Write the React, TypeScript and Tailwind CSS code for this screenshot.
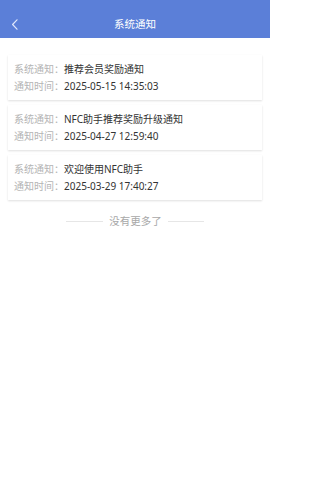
import React from "react";

const items = [
  { title: "推荐会员奖励通知", time: "2025-05-15 14:35:03" },
  { title: "NFC助手推荐奖励升级通知", time: "2025-04-27 12:59:40" },
  { title: "欢迎使用NFC助手", time: "2025-03-29 17:40:27" },
];

export default function App() {
  return (
    <div
      className="w-[270px] h-[480px] bg-white flex flex-col"
      style={{ fontFamily: '"Noto Sans", "Noto Sans CJK SC", sans-serif' }}
    >
      <div className="h-[38px] bg-[#5b7fd8] pt-[10px] shrink-0">
        <div className="relative h-[28px] flex items-center justify-center">
          <svg
            className="absolute left-[11px] top-[9px]"
            width="8"
            height="11"
            viewBox="0 0 8 11"
            fill="none"
          >
            <path d="M6 0.8 L1.6 5.5 L6 10.2" stroke="#dfe7fb" strokeWidth="1.2" strokeLinecap="round" strokeLinejoin="round" />
          </svg>
          <span className="text-[10.5px] text-white leading-none">系统通知</span>
        </div>
      </div>
      <div className="flex flex-col gap-[5px] px-[8px] pt-[17px]">
        {items.map((it, i) => (
          <div
            key={i}
            className="bg-white px-[6px] py-[5.5px] shadow-[0_1px_2px_rgba(0,0,0,0.13)] text-[10px] leading-[17px]"
          >
            <div className="flex">
              <span className="text-[#b4b4b4]">系统通知：</span>
              <span className="text-[#333333]">{it.title}</span>
            </div>
            <div className="flex">
              <span className="text-[#b4b4b4]">通知时间：</span>
              <span className="text-[#333333]">{it.time}</span>
            </div>
          </div>
        ))}
      </div>
      <div className="flex items-center justify-center gap-[6px] mt-[14px]">
        <div className="w-[37px] h-px bg-[#e6e6e6]" />
        <span className="text-[10.5px] leading-[14px] text-[#a8a8a8]">没有更多了</span>
        <div className="w-[36px] h-px bg-[#e6e6e6]" />
      </div>
    </div>
  );
}
